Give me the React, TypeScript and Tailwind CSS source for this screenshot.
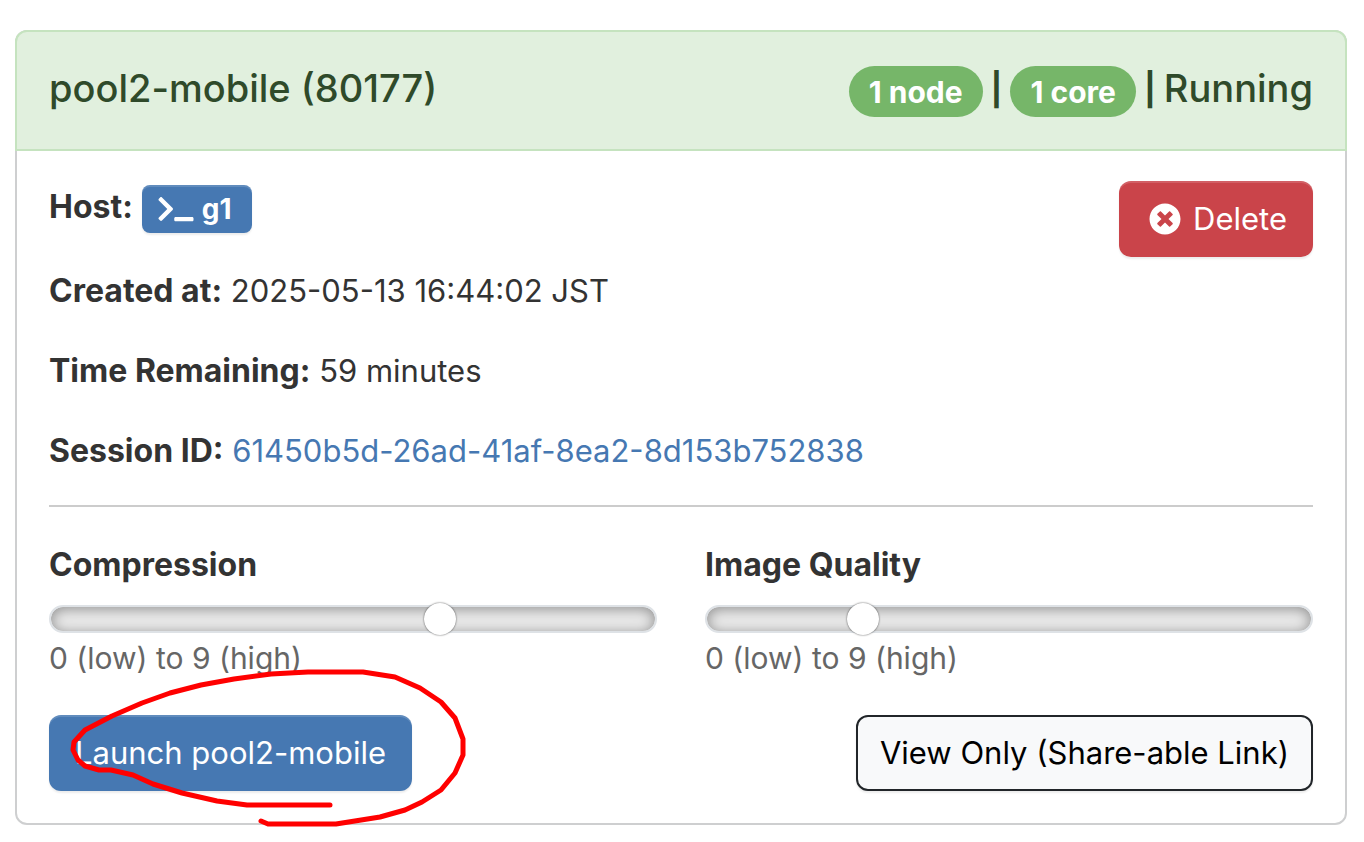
import { FaTerminal, FaTimesCircle } from "react-icons/fa";

const details = [
  { label: "Created at:", value: "2025-05-13 16:44:02 JST" },
  { label: "Time Remaining:", value: "59 minutes" },
];

const sliders = [
  { id: "compression", label: "Compression", value: 6 },
  { id: "quality", label: "Image Quality", value: 2 },
];

function Badge({ children }: { children: React.ReactNode }) {
  return (
    <span className="mt-[2px] rounded-full bg-[#76b669] px-5 pt-[11px] pb-[9px] text-[30px] leading-[31px] font-bold text-white">
      {children}
    </span>
  );
}

function Separator() {
  return <span className="text-[32px] leading-[52px] font-bold">|</span>;
}

function RangeField({ id, label, value }: { id: string; label: string; value: number }) {
  return (
    <div>
      <label htmlFor={id} className="block text-[32px] font-bold">
        {label}
      </label>
      <input
        id={id}
        type="range"
        min={0}
        max={9}
        defaultValue={value}
        aria-describedby={`${id}-help`}
        className="mt-4 block h-[28px] w-full appearance-none rounded-full border-2 border-[#dee2e6] bg-[#ebebeb] px-6 shadow-[inset_0_2px_14px_rgba(0,0,0,0.4)] [&::-webkit-slider-runnable-track]:h-6 [&::-webkit-slider-thumb]:-mt-1 [&::-webkit-slider-thumb]:size-8 [&::-webkit-slider-thumb]:appearance-none [&::-webkit-slider-thumb]:rounded-full [&::-webkit-slider-thumb]:bg-white [&::-webkit-slider-thumb]:shadow-[0_0_2px_rgba(0,0,0,0.7)]"
      />
      <small id={`${id}-help`} className="block text-[30px] leading-[50px] text-[#666]">
        0 (low) to 9 (high)
      </small>
    </div>
  );
}

export default function App() {
  return (
    <main className="bg-white pt-[30px] pr-[17px] pb-4 pl-[15px] font-['Inter','Liberation_Sans',sans-serif] text-[31px] leading-[48px] text-[#333]">
      <section className="rounded-xl border-2 border-[#cecfd0]">
        <header className="-mx-[2px] -mt-[2px] flex items-start justify-between rounded-t-xl border-2 border-[#c5e3bf] bg-[#e1f0de] p-8 text-[38px] font-medium text-[#2f4a2a]">
          <h1>pool2-mobile (80177)</h1>
          <div className="flex items-start gap-2">
            <Badge>1 node</Badge>
            <Separator />
            <Badge>1 core</Badge>
            <Separator />
            <span>Running</span>
          </div>
        </header>

        <div className="px-8 pt-[30px] pb-8">
          <div className="flex items-start justify-between">
            <div className="pt-[2px]">
              <p className="flex items-start gap-[9px] pb-[2px]">
                <strong className="text-[32px]">Host:</strong>
                <a
                  href="#host"
                  className="mt-[2px] flex h-12 items-center gap-2 rounded-lg bg-[#4678b2] pr-5 pl-4 text-[28px] font-bold text-white shadow-[inset_0_2px_0_rgba(255,255,255,0.15),0_2px_2px_rgba(0,0,0,0.075)]"
                >
                  <FaTerminal className="h-7 w-9" />
                  g1
                </a>
              </p>
              {details.map((d) => (
                <p key={d.label} className="mt-8">
                  <strong className="text-[32px]">{d.label}</strong> {d.value}
                </p>
              ))}
            </div>
            <button className="flex items-center gap-3 rounded-xl bg-[#ca444a] py-[14px] pr-[26px] pl-[30px] text-white shadow-[inset_0_2px_0_rgba(255,255,255,0.15),0_2px_2px_rgba(0,0,0,0.075)]">
              <FaTimesCircle className="size-8" />
              Delete
            </button>
          </div>
          <p className="mt-8">
            <strong className="text-[32px]">Session ID:</strong>{" "}
            <a href="#session" className="text-[#4678b2]">
              61450b5d-26ad-41af-8ea2-8d153b752838
            </a>
          </p>

          <hr className="mt-[30px] mb-[34px] border-t-2 border-[#cccccc]" />

          <div className="grid grid-cols-2 gap-12">
            {sliders.map((s) => (
              <RangeField key={s.id} {...s} />
            ))}
          </div>

          <div className="mt-8 flex items-center justify-between">
            <div className="relative">
              <button className="rounded-xl bg-[#4678b2] px-[26px] py-[14px] text-white shadow-[inset_0_2px_0_rgba(255,255,255,0.15),0_2px_2px_rgba(0,0,0,0.075)]">
                Launch pool2-mobile
              </button>
              {/* hand-drawn marker around the launch button */}
              <svg
                viewBox="49 665 420 165"
                className="pointer-events-none absolute -top-[50px] left-0 h-[165px] w-[420px] max-w-none"
                fill="none"
                stroke="#ff0000"
                strokeWidth="5"
                strokeLinecap="round"
                strokeLinejoin="round"
                aria-hidden="true"
              >
                <path d="M330 805H247L217 801L182 793L153 784L133 775L111 770H99L85 766L78 760L73 750L74 742L85 730L112 716L142 703L170 693L201 685L234 679L271 674L308 672H363L395 677L420 688L441 702L455 718L463 739V755L455 773L441 790L422 802L405 810L380 817L336 824H268L261 821" />
              </svg>
            </div>
            <button className="rounded-xl border-2 border-[#212529] bg-[#f8f9fa] px-[22px] py-3 text-black shadow-[0_2px_2px_rgba(0,0,0,0.075)]">
              View Only (Share-able Link)
            </button>
          </div>
        </div>
      </section>
    </main>
  );
}
